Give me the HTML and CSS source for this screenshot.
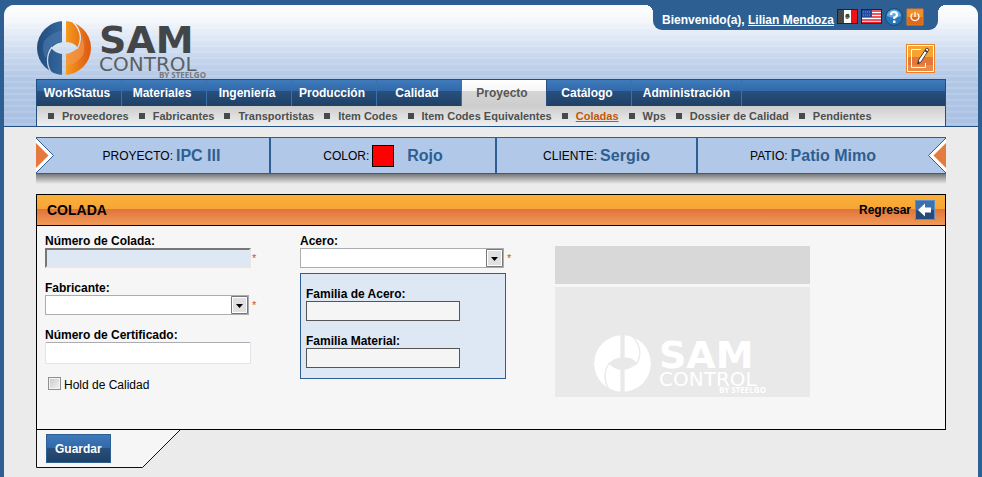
FILE: index.html
```
<!DOCTYPE html>
<html lang="es">
<head>
<meta charset="utf-8">
<title>SAM Control - Colada</title>
<link rel="stylesheet" href="styles.css">
</head>
<body>
<div class="shell">
  <header class="header">
    <div class="masthead">
      <a class="logo" href="#">
        <svg class="logo-mark" viewBox="0 0 54 54" aria-hidden="true">
          <defs>
            <linearGradient id="blue" x1="0" y1="0" x2="1" y2="0"><stop offset="0" stop-color="#234c7c"/><stop offset="1" stop-color="#3469a2"/></linearGradient>
            <linearGradient id="orange" x1="0" y1="0" x2="1" y2="0"><stop offset="0" stop-color="#f7a01c"/><stop offset="1" stop-color="#dc5714"/></linearGradient>
            <mask id="ring">
              <circle cx="27" cy="27" r="27" fill="#fff"/>
              <path d="M25 0h4v54h-4z" fill="#000"/>
              <path d="M14 27Q20 20.500 29 21Q37 21 41 27Q34 33 27 33Q19 33 14 27Z" fill="#000"/>
              <path d="M15 26C9 34 9 44 15 53M40 28C45 20 45 10 36 1" fill="none" stroke="#000" stroke-width="1.300"/>
            </mask>
          </defs>
          <g mask="url(#ring)">
            <path d="M0 0h27v54H0z" fill="url(#blue)"/>
            <path d="M27 0h27v54H27z" fill="url(#orange)"/>
            <path d="M7 20Q16 10 25 10V21Q18 21 14 26Q10 30 9 38Q4 29 7 20Z" fill="#4b79ae" opacity=".6"/>
            <path d="M29 33Q37 32 41 27Q45 22 45 15Q49 26 46 34Q39 44 29 44Z" fill="#f59a55" opacity=".6"/>
          </g>
        </svg>
        <span class="logo-words"><b class="logo-sam">SAM</b><span class="logo-control">CONTROL</span><span class="logo-by">BY STEELGO</span></span>
      </a>
      <div class="masthead-side">
        <div class="user">
          <span class="welcome">Bienvenido(a), <a href="#">Lilian Mendoza</a></span>
          <a class="user-icon" href="#" aria-label="Español"><svg width="21" height="15" viewBox="0 0 21 15"><path fill="#222" d="M0 0h21v15H0z"/><path fill="#454b4b" d="M1 1h6v13H1z"/><path fill="#fff" d="M7 1h7v13H7z"/><path fill="#f01018" d="M14 1h6v13h-6z"/><path fill="#8a7060" d="M8 7q1-3 4-2l1 3-2 2H9z"/><path fill="#3c4a3c" d="M9 5h3v3H9z"/></svg></a>
          <a class="user-icon" href="#" aria-label="English"><svg width="21" height="15" viewBox="0 0 21 15"><path fill="#222" d="M0 0h21v15H0z"/><path fill="#fff" d="M1 1h19v13H1z"/><path d="M1 2h19M1 5h19M1 8h19M1 11h19M1 13.500h19" stroke="#e8202c" stroke-width="1.300"/><path fill="#234a9c" d="M1 1h10v7H1z"/><path d="M2 3h8M2 6h8" stroke="#7d98cc" stroke-dasharray="1 1"/></svg></a>
          <a class="user-icon" href="#" aria-label="Ayuda"><svg width="18" height="18" viewBox="0 0 18 18"><circle cx="9" cy="9" r="8.500" fill="#2774b8" stroke="#154a7d"/><path d="M2 8a7 6.500 0 0 1 14 0Q9 11 2 8Z" fill="#61a9de"/><path d="M6 7Q6 4 9 4T12 6.700Q12 8.500 9.300 9.500V11" fill="none" stroke="#fff" stroke-width="2.200"/><path fill="#fff" d="M8 12.500h2.500V15H8z"/></svg></a>
          <a class="user-icon" href="#" aria-label="Salir"><svg width="18" height="18" viewBox="0 0 18 18"><path d="M1 1h16v16H1z" fill="#f28f2a"/><path d="M1 9h16v8H1z" fill="#dc6a1c"/><path d="M1 1h16v16H1z" fill="none" stroke="#e77d25"/><path d="M6.500 5.500a4 4 0 1 0 5 0M9 4v5" fill="none" stroke="#fff" stroke-width="1.300"/></svg></a>
        </div>
        <a class="edit" href="#" aria-label="Editar"><svg width="29" height="29" viewBox="0 0 29 29"><path fill="#f6a42f" d="M0 0h29v14H0z"/><path fill="#e4773a" d="M0 13h29v16H0z"/><path fill="#eb8a45" d="M0 21h29v8H0z"/><path d="M.5.500h28v28H.5z" fill="none" stroke="#e9822a"/><path d="M1.500 1.500h26v26h-26z" fill="none" stroke="#fff"/><path d="M15 5.500H5.500v18h14V19" fill="none" stroke="#fff"/><path d="M20.500 4l2.500 1.500-8 12.500-3 2 .5-4z" fill="#fff" stroke="#4b4037"/><path d="M19 6.500l2.500 1.500M12 20l1-2.500" stroke="#333" stroke-width="1.500"/></svg></a>
      </div>
    </div>
    <nav class="nav">
      <ul class="tabs">
        <li><a href="#">WorkStatus</a></li>
        <li><a href="#">Materiales</a></li>
        <li><a href="#">Ingeniería</a></li>
        <li><a href="#">Producción</a></li>
        <li><a href="#">Calidad</a></li>
        <li><a class="active" href="#">Proyecto</a></li>
        <li><a href="#">Catálogo</a></li>
        <li><a class="wide" href="#">Administración</a></li>
      </ul>
      <ul class="subnav">
        <li><a href="#">Proveedores</a></li>
        <li><a href="#">Fabricantes</a></li>
        <li><a href="#">Transportistas</a></li>
        <li><a href="#">Item Codes</a></li>
        <li><a href="#">Item Codes Equivalentes</a></li>
        <li><a class="current" href="#">Coladas</a></li>
        <li><a href="#">Wps</a></li>
        <li><a href="#">Dossier de Calidad</a></li>
        <li><a href="#">Pendientes</a></li>
      </ul>
    </nav>
  </header>

  <main class="content">
    <section class="project">
      <svg class="chevron chevron-left" width="18" height="35" viewBox="0 0 18 35" aria-hidden="true"><path d="M0 0L17.500 17.500 0 35z" fill="#fff"/><path d="M0 0L17.500 17.500 0 35" fill="none" stroke="#2d5f92"/><path d="M0 5L12.500 17.500 0 30z" fill="#e47a40"/></svg>
      <div class="fact fact-first">PROYECTO: <b>IPC III</b></div>
      <div class="fact fact-color">COLOR: <span class="swatch"></span><b>Rojo</b></div>
      <div class="fact">CLIENTE: <b>Sergio</b></div>
      <div class="fact fact-last">PATIO: <b>Patio Mimo</b></div>
      <svg class="chevron chevron-right" width="18" height="35" viewBox="0 0 18 35" aria-hidden="true"><path d="M18 0L.5 17.500 18 35z" fill="#fff"/><path d="M18 0L.5 17.500 18 35" fill="none" stroke="#2d5f92"/><path d="M18 5L5.500 17.500 18 30z" fill="#e47a40"/></svg>
    </section>
    <div class="shade"></div>

    <form class="form">
      <section class="panel">
        <div class="panel-head">
          <h1>COLADA</h1>
          <a class="back" href="#">Regresar
            <svg width="20" height="20" viewBox="0 0 20 20" aria-hidden="true"><path fill="#3a72b0" d="M0 0h20v10H0z"/><path fill="#234a78" d="M0 10h20v10H0z"/><path d="M.5.500h19v19H.5z" fill="none" stroke="#5f8fc4"/><path d="M3 10l7-6.500V7.500h6v5h-6v4z" fill="#fff"/></svg>
          </a>
        </div>
        <div class="columns">
          <div class="column">
            <div class="field">
              <label for="colada">Número de Colada:</label>
              <div class="control"><input class="text focus" id="colada" type="text"><span class="required">*</span></div>
            </div>
            <div class="field">
              <label for="fabricante">Fabricante:</label>
              <div class="control"><span class="combo"><select id="fabricante"><option></option></select><svg width="17" height="18" viewBox="0 0 17 18" aria-hidden="true"><path d="M.5.500h16v17H.5z" fill="#fff" stroke="#777"/><path d="M2 2h13v14H2z" fill="#e0e0e0"/><path d="M5 8h7l-3.500 4z" fill="#000"/></svg></span><span class="required">*</span></div>
            </div>
            <div class="field">
              <label for="certificado">Número de Certificado:</label>
              <div class="control"><input class="text tall" id="certificado" type="text"></div>
            </div>
            <div class="check"><input id="hold" type="checkbox"><label for="hold">Hold de Calidad</label></div>
          </div>
          <div class="column">
            <div class="field">
              <label for="acero">Acero:</label>
              <div class="control"><span class="combo"><select id="acero"><option></option></select><svg width="17" height="18" viewBox="0 0 17 18" aria-hidden="true"><path d="M.5.500h16v17H.5z" fill="#fff" stroke="#777"/><path d="M2 2h13v14H2z" fill="#e0e0e0"/><path d="M5 8h7l-3.500 4z" fill="#000"/></svg></span><span class="required">*</span></div>
            </div>
            <div class="family">
              <div class="field">
                <label for="familia-acero">Familia de Acero:</label>
                <input class="locked" id="familia-acero" type="text" readonly>
              </div>
              <div class="field">
                <label for="familia-material">Familia Material:</label>
                <input class="locked" id="familia-material" type="text" readonly>
              </div>
            </div>
          </div>
          <aside class="column messages">
            <div class="messages-head"></div>
            <div class="messages-body">
              <div class="logo logo-pale">
                <svg class="logo-mark" viewBox="0 0 54 54" aria-hidden="true"><circle cx="27" cy="27" r="27" fill="#fff" mask="url(#ring)"/></svg>
                <span class="logo-words"><b class="logo-sam">SAM</b><span class="logo-control">CONTROL</span><span class="logo-by">BY STEELGO</span></span>
              </div>
            </div>
          </aside>
        </div>
      </section>
      <div class="actions">
        <svg width="145" height="39" viewBox="0 0 145 39" aria-hidden="true"><path d="M.5 0V38.500H106.500L144.500.500" fill="#f6f6f6" stroke="#111"/><path d="M0 .5h145" stroke="#000"/></svg>
        <button type="submit">Guardar</button>
      </div>
    </form>
  </main>
</div>
</body>
</html>
```
FILE: styles.css
```
* { box-sizing: border-box; }

body {
  margin: 0;
  padding: 5px 4px 0;
  background: #2d5f92;
  color: #000;
  font: 12px/14px "Liberation Sans", Arial, sans-serif;
}

a { color: inherit; text-decoration: none; }
svg { display: block; }
ul { margin: 0; padding: 0; list-style: none; display: flex; }

.shell {
  min-height: calc(100vh - 5px);
  background: #ebebeb;
  border-radius: 10px 10px 0 0;
}

/* Header */
.header {
  padding: 0 32px;
  border-radius: 10px 10px 0 0;
  border-bottom: 1px solid #234f80;
  background:
    repeating-linear-gradient(rgba(255, 255, 255, 0) 0 4px, rgba(255, 255, 255, .12) 4px 6px),
    linear-gradient(#fff 0, #f3f6fb 16px, #c9d8ee 50px, #b2c7e6 74px, #a9c1e4 100%);
}
.masthead { display: flex; justify-content: space-between; height: 74px; }

.logo { display: flex; align-items: flex-start; gap: 8px; margin-top: 16px; padding-left: 1px; }
.logo-mark { width: 54px; height: 54px; }
.logo-words { display: flex; flex-direction: column; width: 107px; padding-top: 2px; color: #434648; font-family: "DejaVu Sans", sans-serif; }
.logo-sam { font-size: 38px; line-height: 34px; }
.logo-control { font-size: 20px; line-height: 14px; color: #5d6062; }
.logo-by { font: bold 8px/8px "Open Sans", sans-serif; text-align: right; color: #77797b; }

.masthead-side { display: flex; flex-direction: column; align-items: flex-end; padding-right: 8px; }
.user {
  position: relative;
  display: flex;
  align-items: center;
  gap: 3px;
  height: 30px;
  margin-top: -5px;
  padding: 0 14px 0 9px;
  border-radius: 0 0 9px 9px;
  background: #2d5f92;
  color: #fff;
  font-weight: bold;
}
.user::before, .user::after { content: ""; position: absolute; top: 5px; width: 8px; height: 8px; }
.user::before { right: 100%; background: radial-gradient(circle at 0 100%, transparent 8px, #2d5f92 8px); }
.user::after { left: 100%; background: radial-gradient(circle at 100% 100%, transparent 8px, #2d5f92 8px); }
.welcome { padding-top: 10px; }
.welcome a { text-decoration: underline; }
.user-icon { padding-top: 3px; }
.edit { margin: 14px 3px 0 0; }

/* Navigation */
.nav { border: solid #234f80; border-width: 1px 1px 0; font-weight: bold; }
.tabs { background: linear-gradient(#3f7abb, #3169ab 11px, #28507f 11px, #1f4064); }
.tabs a {
  display: flex;
  align-items: center;
  justify-content: center;
  width: 85px;
  height: 26px;
  padding-right: 4px;
  border-right: 1px solid #3a70ac;
  color: #fff;
}
.tabs .wide { width: 110px; padding: 0; }
.tabs .active {
  border-right-color: #28507f;
  background: linear-gradient(#fff, #f6f6f6 11px, #d6d6d6 11px, #cdcdcd);
  color: #5a5653;
}
.subnav { gap: 10px; height: 20px; padding-left: 11px; align-items: center; background: linear-gradient(#cdcdcd, #efefef); color: #4c5050; font-size: 11px; }
.subnav li { display: flex; align-items: center; gap: 8px; }
.subnav li::before { content: ""; width: 6px; height: 6px; background: #454b4b; }
.subnav .current { color: #c25708; text-decoration: underline; }

/* Project summary */
.content { padding: 10px 32px; }
.project {
  position: relative;
  display: grid;
  grid-template-columns: 235fr 226fr 201fr 248fr;
  height: 37px;
  border: solid #2d5f92;
  border-width: 1px 0;
  background: #b1c8e8;
}
.fact { display: flex; align-items: center; justify-content: center; gap: 3px; border-right: 2px solid #2d5f92; }
.fact-first { padding-left: 18px; }
.fact-last { border: 0; padding-right: 18px; }
.fact b { color: #2d5f92; font-size: 16px; }
.fact-color b { margin-left: 10px; }
.swatch { width: 22px; height: 22px; border: 1px solid #000; background: #f00; }
.chevron { position: absolute; top: 0; }
.chevron-left { left: 0; }
.chevron-right { right: 0; }
.shade { height: 10px; margin-bottom: 10px; background: linear-gradient(#777, #ebebeb); }

/* Form panel */
.panel { border: 1px solid #000; background: #f6f6f6; }
.panel-head {
  display: flex;
  align-items: center;
  justify-content: space-between;
  height: 31px;
  padding: 0 10px;
  border-bottom: 1px solid #000;
  background: linear-gradient(#fbb03a, #f7a535 14px, #e2733c 14px, #f09a57);
}
h1 { margin: 0; font-size: 14px; line-height: 16px; }
.back { display: flex; align-items: center; gap: 4px; font-weight: bold; }

.columns { display: grid; grid-template-columns: 255px 255px 255px; padding: 8px 8px 32px; }
.field { margin-bottom: 13px; }
.field label { display: block; font-weight: bold; }
.control { display: flex; align-items: center; gap: 1px; }
.required { color: #c9532b; font-size: 11px; }
.text { width: 206px; height: 20px; border: 1px solid #e3e3ea; border-top-color: #abadb3; border-radius: 2px; background: #fff; }
.text.focus { border-radius: 0; border: 2px solid; border-color: #777 #e6e6e6 #e6e6e6 #777; background: #dee8f4; }
.text.tall { height: 22px; }
.combo { position: relative; margin-right: 2px; }
.combo select { display: block; width: 204px; height: 20px; appearance: none; border: 1px solid #abadb3; border-radius: 0; background: #fff; }
.combo svg { position: absolute; top: 1px; right: 1px; pointer-events: none; }
.check { display: flex; align-items: center; gap: 3px; padding-left: 3px; }
.check input {
  appearance: none;
  width: 13px;
  height: 13px;
  margin: 0 0 3px;
  border: 1px solid #8e8f8f;
  background: linear-gradient(135deg, #c4c8cc, #f4f4f4);
  box-shadow: inset 0 0 0 1px #f4f4f4;
}

.family { width: 206px; margin-top: -8px; padding: 13px 5px 10px; border: 1px solid #2d5f92; background: #dee8f4; }
.family .field:last-child { margin-bottom: 0; }
.locked { display: block; width: 154px; height: 20px; border: 1px solid #555; background: #f5f5f5; }

.messages { display: flex; flex-direction: column; gap: 3px; padding-top: 12px; }
.messages-head { height: 38px; background: #d8d8d8; }
.messages-body { height: 110px; padding: 32px 0 0 38px; background: #e9e9e9; }
.logo-pale { margin-top: 16px; }
.logo-pale .logo-mark { width: 57px; height: 57px; }
.logo-pale .logo-words { padding-top: 3px; }
.logo-pale .logo-words span, .logo-pale .logo-words b { color: #fff; }

/* Action tab under the panel */
.actions { position: relative; margin-top: -1px; width: 145px; }
.actions button {
  position: absolute;
  top: 5px;
  left: 10px;
  height: 29px;
  padding: 0 8px;
  border: 1px solid #2d5f92;
  background: linear-gradient(#3f7abb, #3169ab 13px, #28507f 13px, #1f4064);
  color: #fff;
  font: bold 12px/14px "Liberation Sans", Arial, sans-serif;
}
```
